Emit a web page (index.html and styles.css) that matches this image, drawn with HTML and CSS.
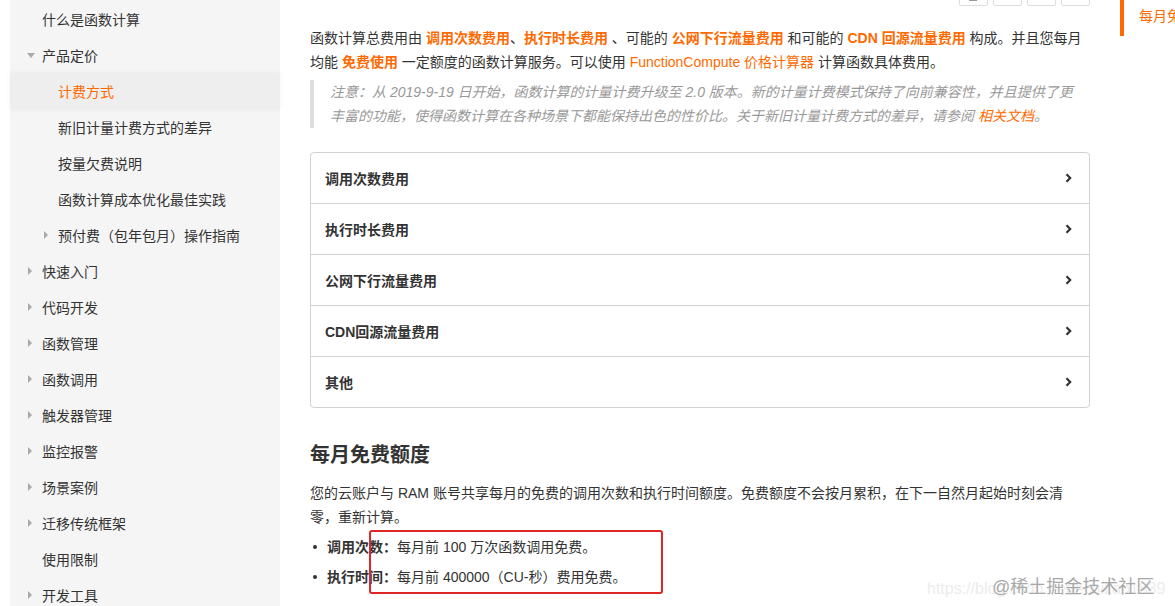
FILE: index.html
```html
<!DOCTYPE html>
<html lang="zh-CN">
<head>
<meta charset="utf-8">
<title>计费方式</title>
<link rel="stylesheet" href="styles.css">
</head>
<body>
<div class="layout">
  <aside class="sidebar">
    <ul class="nav">
      <li class="nav-item"><span class="caret"></span>什么是函数计算</li>
      <li class="nav-item"><span class="caret"><i class="tri-down"></i></span>产品定价</li>
      <li class="nav-item child active"><span class="caret"></span>计费方式</li>
      <li class="nav-item child"><span class="caret"></span>新旧计量计费方式的差异</li>
      <li class="nav-item child"><span class="caret"></span>按量欠费说明</li>
      <li class="nav-item child"><span class="caret"></span>函数计算成本优化最佳实践</li>
      <li class="nav-item child"><span class="caret"><i class="tri-right"></i></span>预付费（包年包月）操作指南</li>
      <li class="nav-item"><span class="caret"><i class="tri-right"></i></span>快速入门</li>
      <li class="nav-item"><span class="caret"><i class="tri-right"></i></span>代码开发</li>
      <li class="nav-item"><span class="caret"><i class="tri-right"></i></span>函数管理</li>
      <li class="nav-item"><span class="caret"><i class="tri-right"></i></span>函数调用</li>
      <li class="nav-item"><span class="caret"><i class="tri-right"></i></span>触发器管理</li>
      <li class="nav-item"><span class="caret"><i class="tri-right"></i></span>监控报警</li>
      <li class="nav-item"><span class="caret"><i class="tri-right"></i></span>场景案例</li>
      <li class="nav-item"><span class="caret"><i class="tri-right"></i></span>迁移传统框架</li>
      <li class="nav-item"><span class="caret"></span>使用限制</li>
      <li class="nav-item"><span class="caret"><i class="tri-right"></i></span>开发工具</li>
    </ul>
  </aside>

  <main class="main">
    <div class="toolbar">
      <span class="tool-btn"><i class="tool-icon"></i></span>
      <span class="tool-btn"></span>
      <span class="tool-btn"></span>
      <span class="tool-btn"></span>
    </div>

    <p class="para intro">函数计算总费用由 <b class="hl">调用次数费用</b>、<b class="hl">执行时长费用</b> 、可能的 <b class="hl">公网下行流量费用</b> 和可能的 <b class="hl">CDN 回源流量费用</b> 构成。并且您每月均能 <b class="hl">免费使用</b> 一定额度的函数计算服务。可以使用 <a class="link">FunctionCompute 价格计算器</a> 计算函数具体费用。</p>

    <blockquote class="note">注意：从 2019-9-19 日开始，函数计算的计量计费升级至 2.0 版本。新的计量计费模式保持了向前兼容性，并且提供了更丰富的功能，使得函数计算在各种场景下都能保持出色的性价比。关于新旧计量计费方式的差异，请参阅 <a class="link">相关文档</a>。</blockquote>

    <div class="accordion">
      <div class="acc-row"><span>调用次数费用</span><svg class="chev" width="7" height="10" viewBox="0 0 7 10"><path d="M1.5 1.2 L5.2 5 L1.5 8.8" fill="none" stroke="#333" stroke-width="2.2"/></svg></div>
      <div class="acc-row"><span>执行时长费用</span><svg class="chev" width="7" height="10" viewBox="0 0 7 10"><path d="M1.5 1.2 L5.2 5 L1.5 8.8" fill="none" stroke="#333" stroke-width="2.2"/></svg></div>
      <div class="acc-row"><span>公网下行流量费用</span><svg class="chev" width="7" height="10" viewBox="0 0 7 10"><path d="M1.5 1.2 L5.2 5 L1.5 8.8" fill="none" stroke="#333" stroke-width="2.2"/></svg></div>
      <div class="acc-row"><span>CDN回源流量费用</span><svg class="chev" width="7" height="10" viewBox="0 0 7 10"><path d="M1.5 1.2 L5.2 5 L1.5 8.8" fill="none" stroke="#333" stroke-width="2.2"/></svg></div>
      <div class="acc-row"><span>其他</span><svg class="chev" width="7" height="10" viewBox="0 0 7 10"><path d="M1.5 1.2 L5.2 5 L1.5 8.8" fill="none" stroke="#333" stroke-width="2.2"/></svg></div>
    </div>

    <h2 class="section-title">每月免费额度</h2>
    <p class="para">您的云账户与 RAM 账号共享每月的免费的调用次数和执行时间额度。免费额度不会按月累积，在下一自然月起始时刻会清零，重新计算。</p>
    <ul class="bullets">
      <li><b>调用次数：</b>每月前 100 万次函数调用免费。</li>
      <li><b>执行时间：</b>每月前 400000（CU-秒）费用免费。</li>
      <span class="mark-box"></span>
    </ul>
  </main>

  <nav class="toc">
    <div class="toc-item">每月免费额度</div>
  </nav>
</div>

<div class="watermark">
  <span class="wm-url">https://blog.csdn.net/echizao1839</span>
  <span class="wm-main">@稀土掘金技术社区</span>
</div>
</body>
</html>
```

FILE: styles.css
```css
html, body {
  margin: 0;
  padding: 0;
  height: 100%;
  overflow: hidden;
  background: #fff;
}

body {
  font-family: "Liberation Sans", "Noto Sans CJK SC", sans-serif;
  font-size: 14px;
  color: #333;
  position: relative;
}

.layout {
  display: flex;
  align-items: stretch;
  min-height: 100vh;
}

/* Sidebar */
.sidebar {
  flex: 0 0 270px;
  margin-left: 10px;
  background: #f5f5f5;
}

.nav {
  list-style: none;
  margin: 0;
  padding: 1px 0 0;
}

.nav-item {
  display: flex;
  align-items: center;
  height: 36px;
  padding-left: 17px;
  color: #333;
  white-space: nowrap;
}

.nav-item.child {
  padding-left: 33px;
}

.nav-item.active {
  color: #ff6a00;
  background: #eeeeee;
  box-shadow: 0 0 6px rgba(0, 0, 0, 0.05);
}

.caret {
  flex: 0 0 15px;
  display: flex;
  align-items: center;
}

.tri-right {
  display: block;
  width: 0;
  height: 0;
  border-left: 4px solid #aaa;
  border-top: 4px solid transparent;
  border-bottom: 4px solid transparent;
  margin-left: 1px;
}

.tri-down {
  display: block;
  width: 0;
  height: 0;
  border-top: 5px solid #aaa;
  border-left: 4px solid transparent;
  border-right: 4px solid transparent;
  margin-top: 1px;
}

/* Main */
.main {
  flex: 0 0 780px;
  margin-left: 30px;
  position: relative;
}

.toolbar {
  height: 6px;
  display: flex;
  justify-content: flex-end;
  align-items: flex-end;
  gap: 5px;
  overflow: hidden;
}

.tool-btn {
  flex: 0 0 auto;
  width: 27px;
  height: 28px;
  border: 1px solid #ddd;
  border-radius: 2px;
  box-sizing: content-box;
  position: relative;
}

.tool-icon {
  position: absolute;
  left: 9px;
  bottom: 4px;
  width: 8px;
  height: 3px;
  background: #999;
}

.para {
  margin: 0;
  line-height: 24px;
}

.intro {
  margin-top: 20px;
}

.hl {
  color: #ff6a00;
  font-weight: bold;
}

.link {
  color: #ff6a00;
  text-decoration: none;
}

.note {
  margin: 6px 0 0;
  padding: 0 10px 0 16px;
  border-left: 4px solid #ddd;
  color: #999;
  font-style: italic;
  line-height: 24px;
}

.accordion {
  margin-top: 24px;
  border: 1px solid #d2d2d2;
  border-radius: 4px;
}

.acc-row {
  display: flex;
  align-items: center;
  justify-content: space-between;
  height: 50px;
  padding: 0 17px 0 14px;
  font-weight: bold;
  color: #333;
  border-top: 1px solid #d2d2d2;
}

.acc-row:first-child {
  border-top: none;
}

.section-title {
  margin: 33px 0 0;
  font-size: 20px;
  line-height: 28px;
  font-weight: bold;
  color: #333;
}

.section-title + .para {
  margin-top: 12px;
}

.bullets {
  position: relative;
  list-style: none;
  margin: 6px 0 0;
  padding: 0;
}

.bullets li {
  position: relative;
  line-height: 24px;
  padding-left: 17px;
  margin-bottom: 6px;
}

.bullets li::before {
  content: "";
  position: absolute;
  left: 3px;
  top: 10px;
  width: 4px;
  height: 4px;
  border-radius: 50%;
  background: #333;
}

.mark-box {
  position: absolute;
  left: 59px;
  top: -5px;
  width: 290px;
  height: 60px;
  border: 2px solid #e02525;
  border-radius: 3px;
}

/* Right TOC */
.toc {
  flex: 0 0 auto;
  margin-left: 30px;
}

.toc-item {
  height: 36px;
  line-height: 32px;
  border-left: 4px solid #ff6a00;
  padding-left: 15px;
  color: #ff6a00;
  white-space: nowrap;
}

/* Watermark */
.watermark {
  position: absolute;
  right: 0;
  bottom: 0;
  width: 250px;
  height: 50px;
}

.wm-url {
  position: absolute;
  left: 2px;
  top: 24px;
  font-size: 16px;
  color: #ececec;
  white-space: nowrap;
}

.wm-main {
  position: absolute;
  left: 67px;
  top: 16px;
  font-size: 18px;
  color: #a8a8a8;
  white-space: nowrap;
  text-shadow: 0 0 1px #fff;
}
```
